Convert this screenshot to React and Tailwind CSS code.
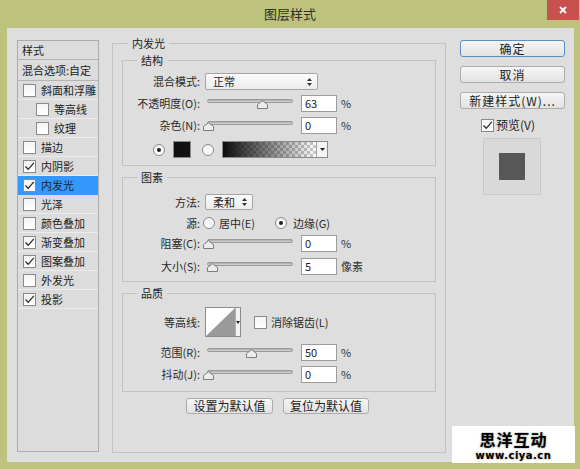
import React from 'react';

const FONT = "font-['Noto_Sans_CJK_SC','Noto_Sans',sans-serif]";

const styleItems = [
  { label: '斜面和浮雕' },
  { label: '等高线', indent: true },
  { label: '纹理', indent: true },
  { label: '描边' },
  { label: '内阴影', checked: true },
  { label: '内发光', checked: true, active: true },
  { label: '光泽' },
  { label: '颜色叠加' },
  { label: '渐变叠加', checked: true },
  { label: '图案叠加', checked: true },
  { label: '外发光' },
  { label: '投影', checked: true },
];

const Checkbox = ({ checked }) => (
  <span className="w-[13px] h-[13px] shrink-0 border border-[#8a8a8a] bg-[linear-gradient(#f4f4f4,#ffffff)] flex items-center justify-center">
    {checked && (
      <svg width="11" height="11" viewBox="0 0 11 11">
        <path d="M1.5 5.5 L4.2 8.3 L9.8 1.8" fill="none" stroke="#2c2c2c" strokeWidth="1.3" />
      </svg>
    )}
  </span>
);

const Radio = ({ checked }) => (
  <span className="w-[12px] h-[12px] shrink-0 rounded-full border border-[#8a8a8a] bg-[linear-gradient(#f0f0f0,#ffffff)] flex items-center justify-center">
    {checked && <span className="w-[4px] h-[4px] rounded-full bg-[#222]" />}
  </span>
);

const Slider = ({ value }) => (
  <div className="relative w-[88px] h-[17px] shrink-0">
    <div className="absolute left-[2px] right-0 top-[4px] h-[4px] rounded-[2px] border border-[#9a9a9a] bg-[linear-gradient(#a8a8a8,#d8d8d8)]" />
    <svg
      className="absolute top-[5px]"
      style={{ left: Math.round(3 + value * 0.86 - 5) }}
      width="11"
      height="9"
      viewBox="0 0 11 9"
    >
      <path d="M0.5 8.5 V4.5 L5.5 0.7 L10.5 4.5 V8.5 Z" fill="#ececec" stroke="#7d7d7d" />
    </svg>
  </div>
);

const NumInput = ({ value }) => (
  <div className="w-[36px] h-[17px] ml-[8px] border border-[#9c9c9c] bg-white pl-[3px] text-[11px] leading-[15px] text-[#222]">
    {value}
  </div>
);

const SelectArrows = () => (
  <svg width="5" height="8" viewBox="0 0 5 8">
    <path d="M0 3 L2.5 0 L5 3 Z M0 5 L2.5 8 L5 5 Z" fill="#333" />
  </svg>
);

const Select = ({ text, w, h }) => (
  <div className={`${w} ${h} border border-[#a5a5a5] rounded-[2px] bg-[linear-gradient(#fbfbfb,#ececec)] flex items-center justify-between pl-[7px] pr-[5px] text-[11px] text-[#222]`}>
    <span>{text}</span>
    <SelectArrows />
  </div>
);

const Label = ({ children }) => (
  <span className="w-[77px] shrink-0 text-right text-[11px] text-[#2a2a2a] whitespace-nowrap">{children}</span>
);

const SliderRow = ({ label, value, unit, className }) => (
  <div className={`flex items-center h-[17px] ${className}`}>
    <Label>{label}</Label>
    <span className="w-[5px] shrink-0" />
    <Slider value={value} />
    <NumInput value={value} />
    <span className="ml-[4px] text-[11px] text-[#333]">{unit}</span>
  </div>
);

const Group = ({ title, className, children }) => (
  <fieldset className={`border border-[#c2c2c2] ${className}`}>
    <legend className="ml-[14px] px-[4px] text-[11px] leading-[14px] text-[#222]">{title}</legend>
    {children}
  </fieldset>
);

const PushButton = ({ children, primary, className }) => (
  <div
    className={`flex items-center justify-center rounded-[3px] border bg-[linear-gradient(#f6f6f6,#e2e2e2)] text-[12px] text-[#222] ${
      primary ? 'border-[#5b8ec4]' : 'border-[#acacac]'
    } ${className}`}
  >
    {children}
  </div>
);

export default function App() {
  return (
    <div className={`relative w-[580px] h-[469px] bg-[#bdc37d] flex flex-col ${FONT}`}>
      {/* title bar */}
      <div className="h-[28px] grid grid-cols-[1fr_auto_1fr] items-center">
        <span />
        <span className="text-[13px] text-[#2e2e2e]">图层样式</span>
        <div className="justify-self-end self-start mr-[1px] w-[32px] h-[20px] bg-[#c8504f] flex items-center justify-center">
          <svg width="8" height="8" viewBox="0 0 8 8">
            <path d="M1 1 L7 7 M7 1 L1 7" stroke="#fff" strokeWidth="1.8" />
          </svg>
        </div>
      </div>

      {/* dialog body */}
      <div className="ml-[7px] w-[567px] h-[434px] bg-[#dedede] flex items-start pt-[8px] pl-[10px]">
        {/* styles list */}
        <div className="mt-[4px] w-[82px] h-[412px] shrink-0 border border-[#ababab] bg-[#dcdcdc] text-[11px] text-[#222]">
          <div className="h-[19px] border-b border-[#b4b4b4] pl-[4px] flex items-center">样式</div>
          <div className="h-[21px] border-b border-[#b4b4b4] pl-[4px] flex items-center whitespace-nowrap">混合选项:自定</div>
          {styleItems.map((item) => (
            <div
              key={item.label}
              className={`h-[19px] flex items-center gap-[5px] border-b ${
                item.active ? 'bg-[#3399ff] border-[#3399ff]' : 'border-[#ececec]'
              } ${item.indent ? 'pl-[18px]' : 'pl-[5px]'}`}
            >
              <Checkbox checked={item.checked} />
              <span className="whitespace-nowrap">{item.label}</span>
            </div>
          ))}
        </div>

        {/* inner glow settings */}
        <fieldset className="ml-[13px] w-[332px] h-[417px] shrink-0 border border-[#c2c2c2]">
          <legend className="ml-[15px] px-[4px] text-[11px] leading-[14px] text-[#222]">内发光</legend>
          <div className="px-[9px] pt-[3px]">
            <Group title="结构" className="w-[314px] pb-[7px]">
              <div className="mt-[6px] flex items-center h-[17px]">
                <Label>混合模式:</Label>
                <span className="w-[5px] shrink-0" />
                <Select text="正常" w="w-[113px]" h="h-[17px]" />
              </div>
              <SliderRow className="mt-[5px]" label="不透明度(O):" value={63} unit="%" />
              <SliderRow className="mt-[5px]" label="杂色(N):" value={0} unit="%" />
              <div className="mt-[7px] h-[17px] flex items-center pl-[30px]">
                <Radio checked />
                <span className="ml-[8px] w-[18px] h-[17px] bg-[#111] border border-[#888]" />
                <span className="ml-[11px]">
                  <Radio />
                </span>
                <div className="ml-[8px] flex h-[17px] border border-[#8a8a8a]">
                  <span className="w-[93px] h-full bg-[image:linear-gradient(to_right,#0c0c0c,rgba(255,255,255,0)),repeating-conic-gradient(#c9c9c9_0_25%,#ffffff_0_50%)] bg-[length:100%_100%,6px_6px]" />
                  <span className="w-[11px] h-full bg-[#f4f4f4] border-l border-[#a0a0a0] flex items-center justify-center">
                    <svg width="5" height="3" viewBox="0 0 5 3">
                      <path d="M0 0 L5 0 L2.5 3 Z" fill="#222" />
                    </svg>
                  </span>
                </div>
              </div>
            </Group>

            <Group title="图素" className="mt-[4px] w-[314px] pb-[6px]">
              <div className="mt-[10px] flex items-center h-[16px]">
                <Label>方法:</Label>
                <span className="w-[5px] shrink-0" />
                <Select text="柔和" w="w-[48px]" h="h-[16px]" />
              </div>
              <div className="mt-[5px] flex items-center h-[16px] text-[11px] text-[#2a2a2a]">
                <Label>源:</Label>
                <span className="w-[3px] shrink-0" />
                <Radio />
                <span className="ml-[4px]">居中(E)</span>
                <span className="ml-[20px]">
                  <Radio checked />
                </span>
                <span className="ml-[6px]">边缘(G)</span>
              </div>
              <SliderRow className="mt-[4px]" label="阻塞(C):" value={0} unit="%" />
              <SliderRow className="mt-[6px]" label="大小(S):" value={5} unit="像素" />
            </Group>

            <Group title="品质" className="mt-[4px] w-[314px] pb-[8px]">
              <div className="mt-[7px] flex items-center h-[30px]">
                <Label>等高线:</Label>
                <span className="w-[5px] shrink-0" />
                <div className="w-[36px] h-[30px] border border-[#8a8a8a] bg-white flex">
                  <svg width="29" height="28" viewBox="0 0 29 28">
                    <path d="M0 28 L29 0 L29 28 Z" fill="#9a9a9a" />
                  </svg>
                  <span className="flex-1 bg-[#f2f2f2] border-l border-[#b0b0b0] flex items-center justify-center">
                    <svg width="4" height="3" viewBox="0 0 4 3">
                      <path d="M0 0 L4 0 L2 3 Z" fill="#222" />
                    </svg>
                  </span>
                </div>
                <span className="ml-[13px]">
                  <Checkbox />
                </span>
                <span className="ml-[4px] text-[11px] text-[#2a2a2a]">消除锯齿(L)</span>
              </div>
              <SliderRow className="mt-[7px]" label="范围(R):" value={50} unit="%" />
              <SliderRow className="mt-[5px]" label="抖动(J):" value={0} unit="%" />
            </Group>

            <div className="mt-[6px] pl-[64px] flex gap-[10px]">
              <PushButton className="w-[87px] h-[16px] text-[11px]">设置为默认值</PushButton>
              <PushButton className="w-[86px] h-[16px] text-[11px]">复位为默认值</PushButton>
            </div>
          </div>
        </fieldset>

        {/* right column */}
        <div className="ml-[14px] mt-[4px] w-[105px] flex flex-col">
          <PushButton primary className="h-[17px] tracking-[1px]">确定</PushButton>
          <PushButton className="mt-[9px] h-[17px] tracking-[1px]">取消</PushButton>
          <PushButton className="mt-[9px] h-[17px] tracking-[1px]">新建样式(W)...</PushButton>
          <div className="mt-[10px] ml-[21px] flex items-center gap-[2px] h-[12px] text-[12px] text-[#222]">
            <Checkbox checked />
            <span>预览(V)</span>
          </div>
          <div className="mt-[7px] ml-[23px] w-[58px] h-[57px] border border-[#c8c8c8] bg-[#d9d9d9] flex items-center justify-center">
            <span className="w-[26px] h-[27px] bg-[#575757]" />
          </div>
        </div>
      </div>

      {/* watermark */}
      <div className="absolute left-[452px] top-[426px] w-[123px] h-[37px] bg-white flex flex-col items-center pt-[5px]">
        <span className="text-[16px] leading-[16px] font-bold tracking-[1px] text-black [text-shadow:0_0_2px_#777]">思洋互动</span>
        <span className="mt-[4px] font-['DejaVu_Sans',sans-serif] text-[10px] leading-[9px] font-bold tracking-[0.5px] text-black [text-shadow:0_0_2px_#888]">
          www.ciya.cn
        </span>
      </div>
    </div>
  );
}
